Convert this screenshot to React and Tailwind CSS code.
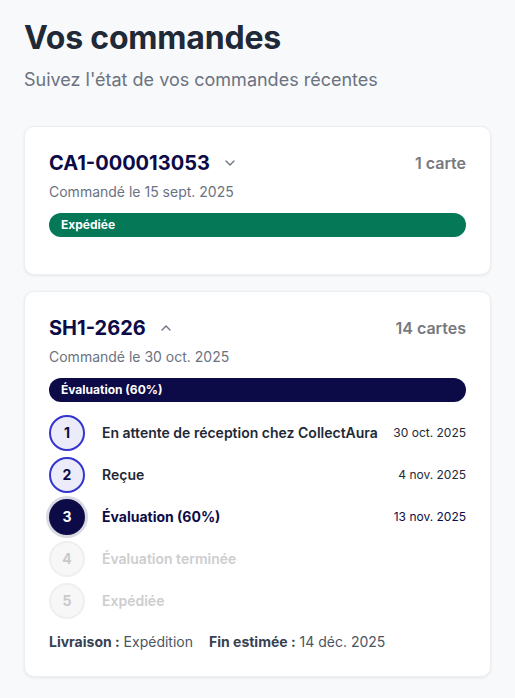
import React from "react";
import { ChevronDown, ChevronUp } from "lucide-react";

const NAVY = "text-[#0c0b47]";

function Step({ n, label, date, state }) {
  let circle, labelCls, dateCls;
  if (state === "done") {
    circle = "border-2 border-[#3434d1] bg-[#ebebf9] text-[#0c0b47]";
    labelCls = "font-semibold text-[#1f2937]";
    dateCls = "text-[#1f2937]";
  } else if (state === "current") {
    circle = "bg-[#0c0b47] text-white ring-[3px] ring-[#d9d9e2]";
    labelCls = "font-bold text-[#0c0b47]";
    dateCls = "text-[#0c0b47]";
  } else {
    circle = "border-2 border-[#efefef] bg-[#f7f7f8] text-[#c9c9cc]";
    labelCls = "font-semibold text-[#cdcdd0]";
    dateCls = "text-[#cdcdd0]";
  }
  return (
    <div className="flex items-center h-9">
      <div
        className={`w-9 h-9 rounded-full flex items-center justify-center text-sm font-bold shrink-0 ${circle}`}
      >
        {n}
      </div>
      <div className={`ml-[17px] flex-1 text-sm ${labelCls}`}>{label}</div>
      {date && <div className={`text-xs ${dateCls}`}>{date}</div>}
    </div>
  );
}

export default function App() {
  return (
    <div
      className="min-h-[698px] bg-[#f8f9fb] px-6 pt-[18px] pb-6"
      style={{ fontFamily: "Inter, 'Noto Sans', sans-serif" }}
    >
      <h1 className="text-[32px] leading-[40px] font-bold text-[#1f2937] tracking-[-0.2px]">
        Vos commandes
      </h1>
      <p className="mt-2 text-lg leading-7 text-[#6b7280]">
        Suivez l'état de vos commandes récentes
      </p>

      <div className="mt-8 flex flex-col gap-4">
        {/* Card 1 */}
        <div className="bg-white rounded-[10px] border border-[#eceef1] shadow-[0_1px_3px_rgba(0,0,0,0.08)] px-6 pt-[22px] pb-[37px]">
          <div className="flex items-start justify-between">
            <div className="flex items-center">
              <span className={`text-xl leading-7 font-bold ${NAVY}`}>CA1-000013053</span>
              <ChevronDown size={16} strokeWidth={2} className="ml-3 text-[#6b7280]" />
            </div>
            <span className="text-base leading-7 font-semibold text-[#77787e]">1 carte</span>
          </div>
          <div className="mt-[5px] text-sm leading-5 text-[#6b7280]">Commandé le 15 sept. 2025</div>
          <div className="mt-[11px] h-6 rounded-full bg-[#047857] flex items-center px-3">
            <span className="text-xs font-bold text-white">Expédiée</span>
          </div>
        </div>

        {/* Card 2 */}
        <div className="bg-white rounded-[10px] border border-[#eceef1] shadow-[0_1px_3px_rgba(0,0,0,0.08)] px-6 pt-[22px] pb-6">
          <div className="flex items-start justify-between">
            <div className="flex items-center">
              <span className={`text-xl leading-7 font-bold ${NAVY}`}>SH1-2626</span>
              <ChevronUp size={16} strokeWidth={2} className="ml-3 text-[#6b7280]" />
            </div>
            <span className="text-base leading-7 font-semibold text-[#77787e]">14 cartes</span>
          </div>
          <div className="mt-[5px] text-sm leading-5 text-[#6b7280]">Commandé le 30 oct. 2025</div>
          <div className="mt-[11px] h-6 rounded-full bg-[#0c0b47] flex items-center px-3">
            <span className="text-xs font-bold text-white">Évaluation (60%)</span>
          </div>

          <div className="mt-[13px] flex flex-col gap-1.5">
            <Step n="1" label="En attente de réception chez CollectAura" date="30 oct. 2025" state="done" />
            <Step n="2" label="Reçue" date="4 nov. 2025" state="done" />
            <Step n="3" label="Évaluation (60%)" date="13 nov. 2025" state="current" />
            <Step n="4" label="Évaluation terminée" state="todo" />
            <Step n="5" label="Expédiée" state="todo" />
          </div>

          <div className="mt-[13px] flex gap-4 text-sm leading-5 text-[#4b5563]">
            <span>
              <span className="font-bold text-[#374151]">Livraison :</span> Expédition
            </span>
            <span>
              <span className="font-bold text-[#374151]">Fin estimée :</span> 14 déc. 2025
            </span>
          </div>
        </div>
      </div>
    </div>
  );
}
